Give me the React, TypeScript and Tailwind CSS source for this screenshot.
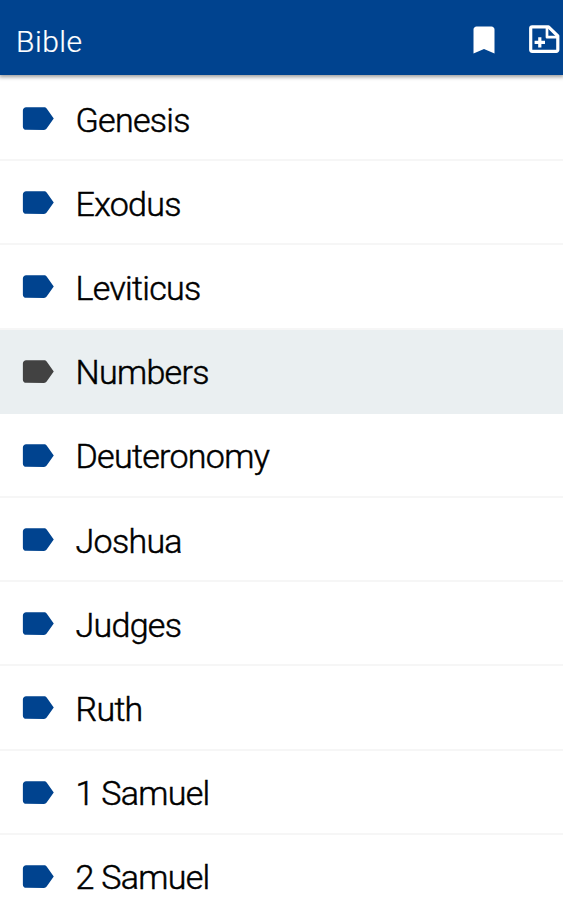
import React, { useState } from 'react';
import { MdBookmark, MdLabel } from 'react-icons/md';

const books = [
  'Genesis', 'Exodus', 'Leviticus', 'Numbers', 'Deuteronomy',
  'Joshua', 'Judges', 'Ruth', '1 Samuel', '2 Samuel',
];

// Note sheet with a folded corner and a plus sign
const NoteAddIcon: React.FC = () => (
  <svg viewBox="0 0 31 28" className="w-[31px] h-7 flex-shrink-0" fill="none" stroke="currentColor" strokeWidth="3.2" strokeLinejoin="round">
    <path d="M3.2 1.8h16.3l9.3 9.2v13.8a1.5 1.5 0 0 1-1.5 1.5H3.2a1.5 1.5 0 0 1-1.5-1.5V3.3a1.5 1.5 0 0 1 1.5-1.5z" />
    <path d="M18 2v10.2h10.5" strokeWidth="2.7" />
    <path d="M10.8 12.2v10.4M5.6 17.4H16" />
  </svg>
);

export default function App() {
  const [selected, setSelected] = useState<string>('Numbers');

  return (
    <div className="w-full h-[900px] overflow-hidden bg-white font-['Roboto',sans-serif]">
      {/* App bar */}
      <header className="relative h-[75px] bg-[#00438f] text-white flex items-center pl-4 shadow-[0_1px_4px_1px_rgba(0,0,0,0.4)]">
        <h1 className="flex-1 text-[30px] font-light tracking-[0.5px] pt-[7px] [-webkit-text-stroke:0.2px_white]">Bible</h1>
        <MdBookmark className="w-9 h-9 mr-[27px] mt-[4px] flex-shrink-0" />
        <div className="w-[34px] mt-[3px]">
          <NoteAddIcon />
        </div>
      </header>

      {/* Book list */}
      <ul className="pt-[2px]">
        {books.map((book) => (
          <li
            key={book}
            onClick={() => setSelected(book)}
            className={`h-[84.2px] flex items-center border-b-2 pl-[18px] cursor-pointer ${
              selected === book ? 'bg-[#eaeff1] border-[#eaeff1]' : 'bg-white border-[#f6f6f6]'
            }`}
          >
            <MdLabel className={`w-[39px] h-[39px] mt-px ${selected === book ? 'text-[#424242]' : 'text-[#00438f]'}`} />
            <span className="ml-[18.5px] pt-[4px] text-[34px] font-light text-black tracking-[-0.7px] [-webkit-text-stroke:0.5px_black]">
              {book}
            </span>
          </li>
        ))}
      </ul>
    </div>
  );
}
